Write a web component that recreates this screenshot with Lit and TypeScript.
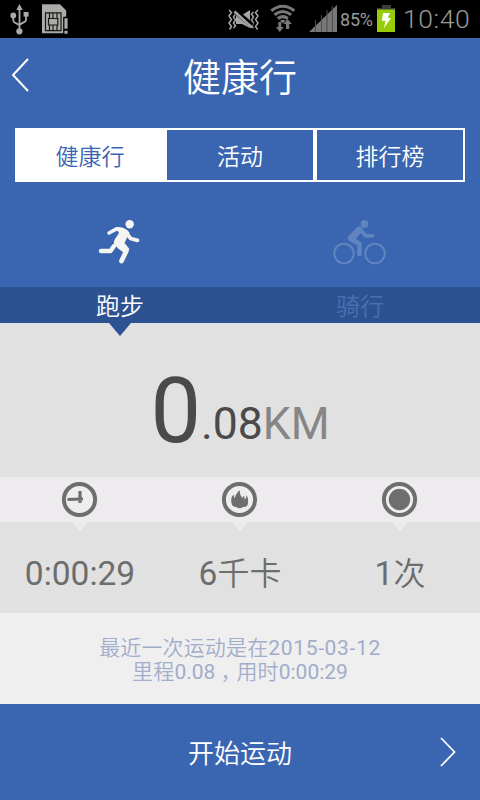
import { LitElement, html, css, svg } from "lit";
import { customElement } from "lit/decorators.js";

const usb = svg`
  <g fill="#a9aba7" stroke="none">
    <path d="M19.5 4l3.2 6h-6.4z"/><circle cx="19.4" cy="31.3" r="3.1"/>
    <circle cx="13.3" cy="15.5" r="2.9"/><rect x="23.6" y="12" width="5" height="4.6"/>
  </g>
  <path d="M19.5 9v22M13.3 16v4.2q0 1.6 1.4 2.3l4.8 2.6M26 15v4.5q0 1.7-1.5 2.4l-5 2.7" fill="none" stroke="#a9aba7" stroke-width="1.8"/>`;

const sim = svg`
  <path d="M42 4.3h18l6.2 6.2v6.3h-2.8v16.4H42z" fill="#a9aba7"/>
  <path d="M45.5 12.8h15.5v17.9H45.5z" fill="#a9aba7" stroke="#161616" stroke-width="1.2"/>
  <path d="M49.5 13v5.500M53 13v5.500M57 13v5.500M49.500 25v5.500M53 25v5.500M57 25v5.500M48.500 18.500h9.300v6.500h-9.300z" fill="none" stroke="#161616" stroke-width="1.200"/>
  <path d="M63.4 17.3h4.8v17h-4.8z" fill="#000"/>
  <path d="M64.4 18.2h3.2v10.6h-3.2zM64.4 30.8h3.2v3h-3.2z" fill="#a9aba7"/>`;

@customElement("app-root")
export class AppRoot extends LitElement {
  static styles = css`
    :host {
      display: flex;
      flex-direction: column;
      width: 480px;
      height: 800px;
      overflow: hidden;
      background: #3a66b1;
      font-family: Roboto, "Noto Sans CJK SC DemiLight", "Noto Sans CJK SC", sans-serif;
      color: #fff;
    }
    * { box-sizing: border-box; }
    svg { display: block; flex: none; }
    .status { height: 38px; background: #000; display: flex; color: #999b98; }
    .level { width: 36px; font-size: 18px; line-height: 40px; letter-spacing: -0.2px; }
    .clock { margin-left: 7px; font-size: 26.5px; line-height: 37px; font-weight: 300; letter-spacing: 0.6px; }
    .title { height: 90px; display: grid; grid-template-columns: 60px 1fr 60px; }
    .title h1, .tab, .name, .cjk, .start div { font-family: "Noto Sans CJK SC DemiLight", "Noto Sans CJK SC", sans-serif; font-weight: 350; }
    .title h1 { margin: 0; font-size: 38px; line-height: 74px; text-align: center; }
    .tabs { height: 54px; margin: 0 15px; display: grid; grid-template-columns: 150px 150px 150px; }
    .tab { height: 54px; border: 2px solid #fff; font-size: 23px; line-height: 50px; text-align: center; }
    .tab.on { background: #fff; color: #3a66b1; width: 152px; padding-right: 2px; }
    .sports { height: 105px; display: grid; grid-template-columns: 1fr 1fr; }
    .names { height: 36px; background: #2c5292; display: grid; grid-template-columns: 1fr 1fr; }
    .name { height: 36px; font-size: 24px; line-height: 36px; text-align: center; position: relative; }
    .name.off { color: #4a70af; }
    .name.on::after {
      content: ""; position: absolute; left: 109px; top: 36px;
      border: solid transparent; border-width: 13px 11.5px 0; border-top-color: #2c5292;
    }
    .distance {
      height: 154px; background: #e1e1e1; color: #4a4a4a;
      display: flex; justify-content: center;
    }
    .whole { font-size: 90px; line-height: 178px; height: 154px; }
    .part, .unit { font-size: 44.5px; line-height: 202px; height: 154px; }
    .unit { color: #868686; }
    .icons { height: 45px; background: #edebee; display: grid; grid-template-columns: repeat(3, 1fr); }
    .icon { position: relative; }
    .icon::after {
      content: ""; position: absolute; left: 72px; top: 45px;
      border: solid transparent; border-width: 9px 8px 0; border-top-color: #edebee;
    }
    .values {
      height: 91px; background: #e1e1e1; color: #6d6d6d;
      display: grid; grid-template-columns: repeat(3, 1fr);
      font-size: 33.5px; line-height: 103px; text-align: center;
    }
    .values div { height: 91px; }
    .cjk { font-size: 32px; line-height: 1; }
    .last {
      height: 91px; background: #efefef; color: #a1adca; padding-top: 23px;
      font-size: 21px; line-height: 24px; text-align: center;
    }
    .last div { height: 24px; }
    .zh { font-weight: 350; letter-spacing: 0.15px; }
    .comma { font-weight: 350; letter-spacing: -5px; margin-left: 5px; }
    .date { letter-spacing: 0.65px; }
    .start { height: 96px; display: grid; grid-template-columns: 60px 1fr 60px; }
    .start div { font-size: 26px; line-height: 96px; text-align: center; }
  `;

  render() {
    return html`
      <div class="status">
        <svg width="340" height="38" viewBox="0 0 340 38">
          ${usb}${sim}
          <g fill="none" stroke="#a4a6a3" stroke-width="1.5">
            <path d="M229 10l2.500 2.500-2.500 3.500 2.500 3.500-2.500 3.500 2.500 3.500-2 3M233.500 12l2 2-2 3 2 3-2 3 2 3-2 2M258 10l-2.500 2.500 2.500 3.500-2.500 3.500 2.500 3.500-2.500 3.500 2 3M253.500 12l-2 2 2 3-2 3 2 3-2 3 2 2"/>
          </g>
          <path d="M236 15h6l8-5v18l-8-4h-6z" fill="#a4a6a3"/>
          <path d="M234.500 10.500l17.500 15" stroke="#000" stroke-width="5"/>
          <path d="M234.500 11.500l17.500 16" stroke="#a4a6a3" stroke-width="2.400"/>
          <g fill="none" stroke="#777977" stroke-width="3">
            <path d="M271.300 10.700q11.500-9 23 0M274.500 14.700q8.300-6.400 16.600 0M277.700 18.500q5.100-3.800 10.200 0"/>
          </g>
          <path d="M280 20.500q2.800-1.500 5.600 0l-2.800 3z" fill="#777977"/>
          <path d="M278.300 22h3v5h2.500l-4 5-4-5h2.500zM286 29h3.200v-5h2.600l-4.200-5-4.200 5h2.600z" fill="#777977"/>
          <path d="M309 32L337 5v27z" fill="#777977"/>
          <path d="M315.500 20v12M321.500 15v17M327 10v22M332.300 6v26" stroke="#4a4b4a" stroke-width="1"/>
        </svg>
        <div class="level">85%</div>
        <svg width="20" height="38" viewBox="376 0 20 38">
          <path d="M382 5h9v3h4v2h-18V8h5z" fill="#3c3c3c"/>
          <path d="M377 9.500h18V32h-18z" fill="#99cc08"/>
          <path d="M383 13h7l-2.300 5h3.300l-7 10 1.500-7.300h-3.700z" fill="#fff"/>
        </svg>
        <div class="clock">10:40</div>
      </div>

      <div class="title">
        <svg width="60" height="90" viewBox="0 0 60 90">
          <path d="M28 21L13 37l15 16" fill="none" stroke="#fff" stroke-width="2"/>
        </svg>
        <h1>健康行</h1>
      </div>

      <div class="tabs">
        <div class="tab on">健康行</div>
        <div class="tab">活动</div>
        <div class="tab">排行榜</div>
      </div>

      <div class="sports">
        <svg width="240" height="105" viewBox="0 182 240 105">
          <circle cx="129.700" cy="224.300" r="4.200" fill="#f4f5f2"/>
          <path d="M115.500 228q4-1.500 8 0 4 1.500 6 4.500l-5 10.500 5 6-6 3.500q-6-4-9-8-1.500-2.500.5-5.500l4-6z" fill="#f4f5f2"/>
          <g fill="none" stroke="#f4f5f2" stroke-linecap="round" stroke-linejoin="round">
            <path d="M109 233l8-4.300 6 1.300" stroke-width="3.600"/>
            <path d="M126 232l4.500 6.500 7 1.800" stroke-width="3.800"/>
            <path d="M101 251h9.500l3.500-5" stroke-width="4.400"/>
            <path d="M120 245l6.500 5.500-5 10.500" stroke-width="4.800"/>
          </g>
        </svg>
        <svg width="240" height="105" viewBox="240 182 240 105">
          <g fill="none" stroke="#6084c0">
            <circle cx="344" cy="253.500" r="9.800" stroke-width="2"/>
            <circle cx="375" cy="253.500" r="9.800" stroke-width="2"/>
            <path d="M360 228.500l5.500 7.300h7" stroke-width="3.600" stroke-linecap="round" stroke-linejoin="round"/>
            <path d="M350 238.500l9.500 5.500v10" stroke-width="4.600" stroke-linecap="round" stroke-linejoin="round"/>
          </g>
          <circle cx="364.500" cy="224" r="3.900" fill="#6084c0"/>
          <path d="M347.500 237l9.500-10q3-1.500 4.500 1l1 3.500-6.500 6.500 3 6h-5z" fill="#6084c0"/>
        </svg>
      </div>
      <div class="names">
        <div class="name on">跑步</div>
        <div class="name off">骑行</div>
      </div>

      <div class="distance">
        <span class="whole">0</span><span class="part">.08</span><span class="unit">KM</span>
      </div>

      <div class="icons">
        <div class="icon">
          <svg width="160" height="45" viewBox="0 0 160 45">
            <circle cx="79.500" cy="22.500" r="15.600" fill="#eee" stroke="#6e6e6e" stroke-width="4"/>
            <path d="M67.500 22.500l15.500-.5M80 14v12" fill="none" stroke="#6e6e6e" stroke-width="3.200"/>
          </svg>
        </div>
        <div class="icon">
          <svg width="160" height="45" viewBox="0 0 160 45">
            <circle cx="79.500" cy="22.500" r="15.600" fill="#eee" stroke="#6e6e6e" stroke-width="4"/>
            <path d="M79.500 13q-4.500 5-4.500 8.500-1.300-1.500-1.300-4-3 3-2.500 7 .5 5.500 5 5.500 3.300 2.500 7 0 5 .3 5-5.500 0-4-1.700-6.500 0 3-1.800 4.500 0-2.500-1-4l-1.300 2.500q-2.700-3-2.900-8z" fill="#6e6e6e"/>
          </svg>
        </div>
        <div class="icon">
          <svg width="160" height="45" viewBox="0 0 160 45">
            <circle cx="79.500" cy="22.500" r="15.600" fill="#eee" stroke="#6e6e6e" stroke-width="4"/>
            <circle cx="79.500" cy="22.500" r="10.700" fill="#6e6e6e"/>
          </svg>
        </div>
      </div>

      <div class="values">
        <div>0:00:29</div>
        <div>6<span class="cjk">千卡</span></div>
        <div>1<span class="cjk">次</span></div>
      </div>

      <div class="last">
        <div><span class="zh">最近一次运动是在</span><span class="date">2015-03-12</span></div>
        <div><span class="zh">里程</span>0.08<span class="comma">，</span><span class="zh">用时</span>0:00:29</div>
      </div>

      <div class="start">
        <span></span>
        <div>开始运动</div>
        <svg width="60" height="96" viewBox="420 704 60 96">
          <path d="M441 738l13.500 14L441 766" fill="none" stroke="#fff" stroke-width="1.800"/>
        </svg>
      </div>
    `;
  }
}
